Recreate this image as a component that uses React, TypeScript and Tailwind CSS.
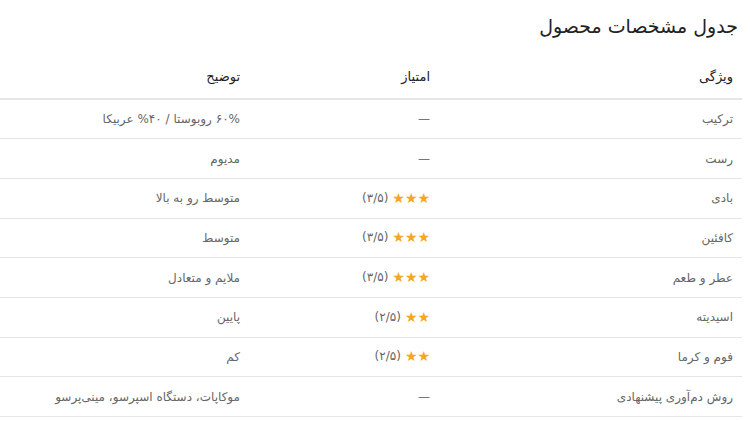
import React from 'react';

type Row = { feature: string; stars: number; desc: string };

const rows: Row[] = [
    { feature: 'ترکیب', stars: 0, desc: '۶۰% روبوستا / ۴۰% عربیکا' },
    { feature: 'رست', stars: 0, desc: 'مدیوم' },
    { feature: 'بادی', stars: 3, desc: 'متوسط رو به بالا' },
    { feature: 'کافئین', stars: 3, desc: 'متوسط' },
    { feature: 'عطر و طعم', stars: 3, desc: 'ملایم و متعادل' },
    { feature: 'اسیدیته', stars: 2, desc: 'پایین' },
    { feature: 'فوم و کرما', stars: 2, desc: 'کم' },
    { feature: 'روش دم‌آوری پیشنهادی', stars: 0, desc: 'موکاپات، دستگاه اسپرسو، مینی‌پرسو' },
];

const faDigits = ['۰', '۱', '۲', '۳', '۴', '۵', '۶', '۷', '۸', '۹'];

function Rating({ stars }: { stars: number }) {
    if (!stars) return <span className="text-[#777]">—</span>;
    return (
        <span className="inline-flex items-center gap-[4px]">
            <span className="text-[#f5a623] text-[14px] leading-none">{'★'.repeat(stars)}</span>
            <span dir="ltr" className="text-[#666] text-[12px]">({faDigits[stars]}/۵)</span>
        </span>
    );
}

export default function App() {
    return (
        <div dir="rtl" className="w-[750px] h-[421px] bg-white pr-2 overflow-hidden" style={{ fontFamily: '"DejaVu Sans", "Noto Sans", sans-serif' }}>
            <h2 className="text-[19px] text-[#222] pt-[11px] pr-[4px] leading-[30px] font-normal">جدول مشخصات محصول</h2>
            <table className="w-[742px] border-collapse table-fixed mt-[14px]">
                <colgroup>
                    <col className="w-[303px]" />
                    <col className="w-[190px]" />
                    <col className="w-[249px]" />
                </colgroup>
                <thead>
                    <tr className="border-b-2 border-[#e6e6e6] h-[44px]">
                        <th className="text-right px-[9px] text-[13px] font-normal text-[#222]">ویژگی</th>
                        <th className="text-right px-[9px] text-[13px] font-normal text-[#222]">امتیاز</th>
                        <th className="text-right px-[9px] text-[13px] font-normal text-[#222]">توضیح</th>
                    </tr>
                </thead>
                <tbody>
                    {rows.map(r => (
                        <tr key={r.feature} className="border-b border-[#e6e6e6] h-[39.7px]">
                            <td className="px-[9px] text-[12px] text-[#666]">{r.feature}</td>
                            <td className="px-[9px] text-[12px] text-[#666]"><Rating stars={r.stars} /></td>
                            <td className="px-[9px] text-[12px] text-[#666]">{r.desc}</td>
                        </tr>
                    ))}
                </tbody>
            </table>
        </div>
    );
}
